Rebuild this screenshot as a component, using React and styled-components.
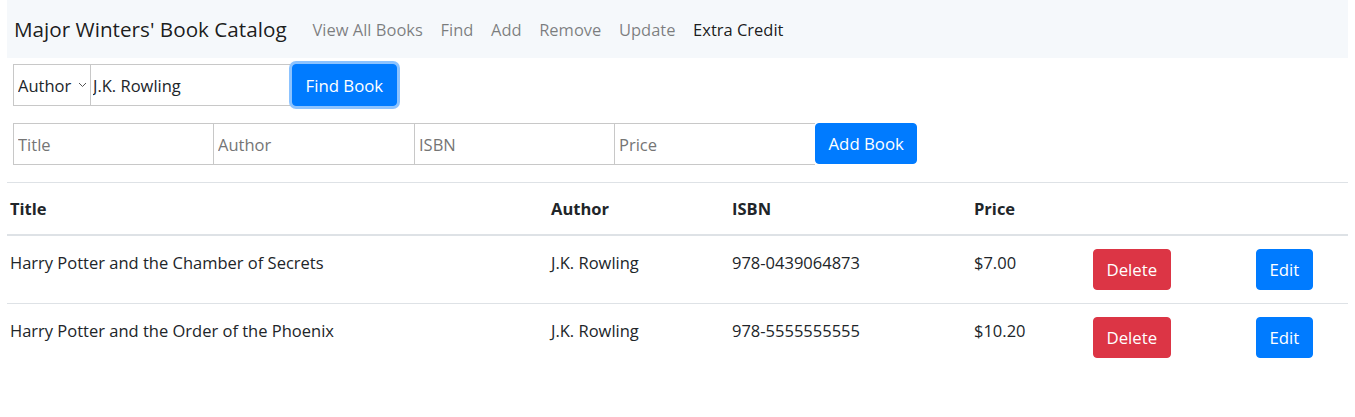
import React from "react";
import styled, { createGlobalStyle } from "styled-components";

const GlobalStyle = createGlobalStyle`
  body {
    margin: 0;
    background: #fff;
    font-family: "Open Sans", "Noto Sans", sans-serif;
    color: #212529;
  }
  * { box-sizing: border-box; }
`;

const books = [
  { title: "Harry Potter and the Chamber of Secrets", author: "J.K. Rowling", isbn: "978-0439064873", price: "$7.00" },
  { title: "Harry Potter and the Order of the Phoenix", author: "J.K. Rowling", isbn: "978-5555555555", price: "$10.20" },
];

const App = () => {
  return (
    <Page>
      <GlobalStyle />
      <Navbar>
        <Brand>Major Winters' Book Catalog</Brand>
        <NavLink>View All Books</NavLink>
        <NavLink>Find</NavLink>
        <NavLink>Add</NavLink>
        <NavLink>Remove</NavLink>
        <NavLink>Update</NavLink>
        <NavLink active>Extra Credit</NavLink>
      </Navbar>

      <FormRow top={6}>
        <SelectWrap>
          <Select defaultValue="author">
            <option value="author">Author</option>
            <option value="title">Title</option>
          </Select>
          <Chevron width="9" height="6" viewBox="0 0 9 6">
            <path d="M1 1l3.5 3.5L8 1" fill="none" stroke="#555" strokeWidth="1" />
          </Chevron>
        </SelectWrap>
        <Input width={200} defaultValue="J.K. Rowling" tight />
        <Button focused>Find Book</Button>
      </FormRow>

      <FormRow top={17}>
        <Input width={200} placeholder="Title" />
        <Input width={201} placeholder="Author" />
        <Input width={200} placeholder="ISBN" />
        <Input width={201} placeholder="Price" />
        <Button>Add Book</Button>
      </FormRow>

      <Table>
        <colgroup>
          <col style={{ width: 541 }} />
          <col style={{ width: 181 }} />
          <col style={{ width: 242 }} />
          <col style={{ width: 119 }} />
          <col style={{ width: 163 }} />
          <col style={{ width: 95 }} />
        </colgroup>
        <thead>
          <tr>
            <Th>Title</Th>
            <Th>Author</Th>
            <Th>ISBN</Th>
            <Th>Price</Th>
            <Th />
            <Th />
          </tr>
        </thead>
        <tbody>
          {books.map((b) => (
            <tr key={b.isbn}>
              <Td>{b.title}</Td>
              <Td>{b.author}</Td>
              <Td>{b.isbn}</Td>
              <Td>{b.price}</Td>
              <Td>
                <Button variant="danger">Delete</Button>
              </Td>
              <Td>
                <Button>Edit</Button>
              </Td>
            </tr>
          ))}
        </tbody>
      </Table>
    </Page>
  );
};

//styled Components
const Page = styled.div`
  padding: 0 7px;
`;

const Navbar = styled.nav`
  display: flex;
  align-items: center;
  height: 58px;
  padding: 0 7px;
  background-color: #f5f8fb;
`;

const Brand = styled.span`
  font-size: 20.7px;
  color: rgba(0, 0, 0, 0.9);
  margin-right: 17px;
  white-space: nowrap;
`;

const NavLink = styled.a`
  font-size: 16.5px;
  padding: 8px 8.8px;
  color: ${(p) => (p.active ? "rgba(0, 0, 0, 0.9)" : "rgba(0, 0, 0, 0.5)")};
  cursor: pointer;
  white-space: nowrap;
`;

const FormRow = styled.div`
  display: flex;
  align-items: stretch;
  margin-top: ${(p) => p.top}px;
  padding-left: 6px;
  height: 42px;
`;

const SelectWrap = styled.div`
  position: relative;
  width: 77px;
  display: flex;
`;

const Select = styled.select`
  appearance: none;
  width: 100%;
  font-family: inherit;
  font-size: 16.5px;
  color: #212529;
  padding: 0 0 0 4px;
  border: 1px solid #c8c8c8;
  border-right: none;
  background: #fff;
  border-radius: 0;
  outline: none;
`;

const Chevron = styled.svg`
  position: absolute;
  right: 3px;
  top: 18px;
  pointer-events: none;
`;

const Input = styled.input`
  width: ${(p) => p.width}px;
  font-family: inherit;
  font-size: 16.5px;
  color: #212529;
  padding: 0 ${(p) => (p.tight ? 2 : 4)}px;
  border: 1px solid #c8c8c8;
  border-right: none;
  border-radius: 0;
  outline: none;
  &::placeholder {
    color: #757575;
  }
`;

const Button = styled.button`
  font-family: inherit;
  font-size: 16.8px;
  color: #fff;
  background-color: ${(p) => (p.variant === "danger" ? "#dc3545" : "#007bff")};
  border: 1px solid ${(p) => (p.variant === "danger" ? "#dc3545" : "#007bff")};
  border-radius: 4px;
  padding: 0 12.5px;
  height: ${(p) => (p.focused ? "42px" : "41px")};
  box-shadow: ${(p) => (p.focused ? "0 0 0 3px rgba(0, 123, 255, 0.45)" : "none")};
  margin-left: ${(p) => (p.focused ? "2px" : "0")};
  cursor: pointer;
  white-space: nowrap;
`;

const Table = styled.table`
  width: 1341px;
  margin-top: 17px;
  border-collapse: collapse;
  table-layout: fixed;
  font-size: 16.5px;
  td button {
    height: 41px;
  }
`;

const Th = styled.th`
  text-align: left;
  font-weight: 700;
  padding: 12px 3px;
  line-height: 27px;
  border-top: 1px solid #dee2e6;
  border-bottom: 2px solid #dee2e6;
`;

const Td = styled.td`
  vertical-align: top;
  padding: 13px 3px;
  line-height: 28px;
  border-top: 1px solid #dee2e6;
  tbody tr:first-child & {
    border-top: none;
  }
`;

export default App;
